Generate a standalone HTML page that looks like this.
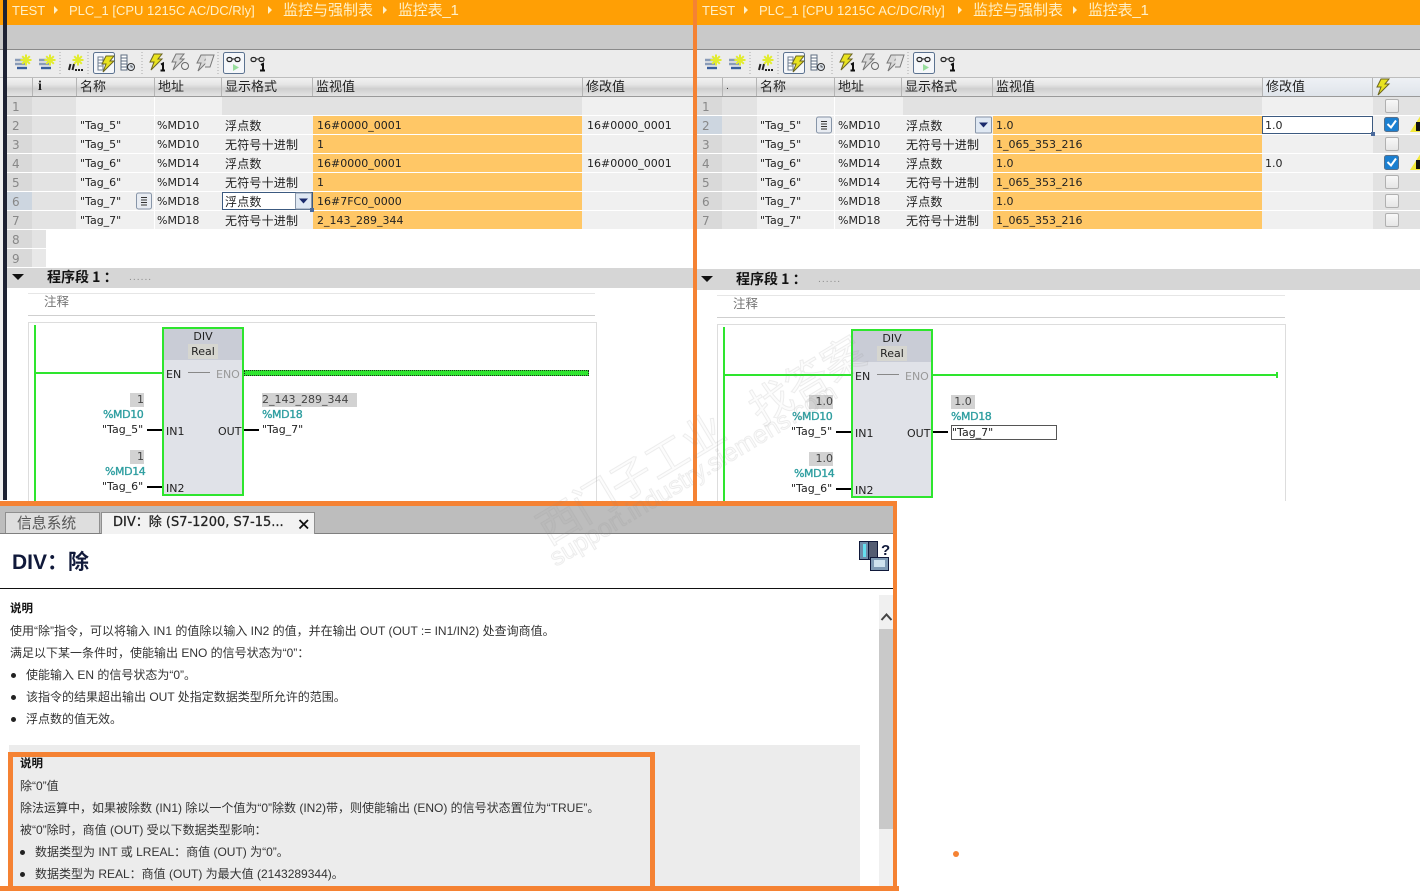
<!DOCTYPE html>
<html lang="zh"><head><meta charset="utf-8"><title>DIV</title>
<style>
html,body{margin:0;padding:0;background:#fff}
#p{position:relative;width:1420px;height:891px;overflow:hidden;background:#fff;font-family:"DejaVu Sans","Noto Sans CJK SC",sans-serif;color:#222}
#p div,#p span,#p b,#p i{position:absolute;display:block;font-style:normal}
.t{top:0;height:25px;background:#ff9f05}
.tt{top:2px;height:17px;color:#fff0c8;font:13px/17px "Liberation Sans","Noto Sans CJK SC",sans-serif;white-space:nowrap}
.ar{top:6px;width:0;height:0;border-left:4px solid #fff0c8;border-top:4px solid transparent;border-bottom:4px solid transparent}
.g1{top:25px;height:24px;background:#c9c9c9;border-bottom:1px solid #8a8a8a}
.g2{top:50px;height:27px;background:#ececec;border-bottom:1px solid #bdbdbd}
.h{top:78px;height:18px;background:linear-gradient(#f1f1f1,#e6e6e6 35%,#cfcfcf 60%,#e4e4e4);border-bottom:1px solid #9a9a9a}
.hc{top:78px;height:18px;line-height:19px;font-size:13px;padding-left:3px;border-left:1px solid #b5b5b5;color:#222;white-space:nowrap;box-sizing:border-box}
.r{left:0;width:1420px;height:18px}
.r span,.r b,.r i{top:0;height:18px;line-height:20px;font-size:11px;font-weight:400;white-space:nowrap;background:#f0f0f0;box-sizing:border-box;letter-spacing:0}
.r .n{background:#d9d9d9;color:#888;font-size:12px;padding-left:5px}
.r .k{background:#e3e3e3}
.r .m{background:#ffc766}
.r .cn{font-size:12px;letter-spacing:.2px}
.L .n{left:7px;width:25px}.L .k{left:32px;width:44px}.L .a{left:76px;width:78px;padding-left:4px}.L .b{left:155px;width:67px;padding-left:2px}.L .f{left:222px;width:91px;padding-left:3px}.L .m{left:313px;width:269px;padding-left:4px}.L .v{left:582px;width:111px;padding-left:5px}
.R .n{left:697px;width:25px}.R .k{left:722px;width:35px}.R .a{left:757px;width:77px;padding-left:3px}.R .b{left:835px;width:68px;padding-left:3px}.R .f{left:903px;width:90px;padding-left:3px}.R .m{left:993px;width:269px;padding-left:3px}.R .v{left:1262px;width:111px;padding-left:3px}.R .x{left:1373px;width:47px}
.g{background:#e2e2e2!important}
.cb{left:1385px;width:12px;height:12px;top:2px;border:1px solid #b0b0b0;border-radius:2px;background:linear-gradient(#f8f8f8,#e6e6e6)}
.sec{height:20px;background:#d6d6d6}
.tri{width:0;height:0;border-top:6px solid #111;border-left:6px solid transparent;border-right:6px solid transparent}
.s13{font:700 14px/18px "Noto Sans CJK SC",sans-serif;white-space:nowrap;color:#111}
.fb{width:78px;height:165px;border:2px solid #2ee52e;background:#e0e2e8}
.fh{left:0;top:0;width:78px;height:31px;background:#c9ccd6}
.l{font-size:11px;line-height:14px;white-space:nowrap;color:#222}
.tl{font-size:11px;-webkit-text-stroke:.35px #2e9ea0;letter-spacing:-.4px;line-height:14px;color:#2e9ea0;white-space:nowrap}
.bx{background:#d2d2d2;font-size:11px;line-height:14px;height:14px;text-align:right;white-space:nowrap;color:#444}
.bl{background:#000;height:2px}
.gr{background:#2ee52e}
.o{background:#f58233}
.d{font:12px/16px "Liberation Sans","Noto Sans CJK SC",sans-serif;color:#333;white-space:nowrap}
.dot{width:5px;height:5px;border-radius:50%;background:#222}
.w{color:rgba(0,0,0,.012);-webkit-text-stroke:1px rgba(150,150,150,.16);white-space:nowrap;transform-origin:0 50%;transform:rotate(-31deg);line-height:1;font-family:"Noto Sans CJK SC",sans-serif}
</style></head><body><div id="p">

<svg width="0" height="0" style="position:absolute"><defs>
<g id="star"><path d="M0 -5.500V5.500M-5.500 0H5.500M-3.800 -3.800L3.800 3.800M-3.800 3.800L3.800 -3.800" stroke="#e2ec2e" stroke-width="2"/></g>
<g id="bolt"><path d="M5 0H13L9 5H13L2 16L5 8H1Z" fill="#e8e220" stroke="#6a6420" stroke-width="1"/></g>
<g id="tb">
<path d="M15 60H27M15 64H25" stroke="#8a9cb8" stroke-width="2.400" fill="none"/><path d="M17 68H27" stroke="#3a5f9e" stroke-width="2.400"/><use href="#star" x="26" y="60"/>
<path d="M39 60H51M39 64H49" stroke="#8a9cb8" stroke-width="2.400" fill="none"/><path d="M41 68H51" stroke="#3a5f9e" stroke-width="2.400"/><use href="#star" x="50" y="60"/>
<path d="M60 52V76" stroke="#aaa" stroke-dasharray="1 2"/>
<path d="M69 70L70.500 64M72.500 70L74 64" stroke="#222" stroke-width="2"/><path d="M75 70H84" stroke="#222" stroke-width="2" stroke-dasharray="2 1"/><use href="#star" x="78" y="60"/>
<path d="M88 52V76" stroke="#aaa" stroke-dasharray="1 2"/>
<rect x="93.500" y="52.500" width="21" height="21" rx="2" fill="#f5f7fa" stroke="#5b7290"/>
<path d="M98 57H103V70H98ZM98 60H103M98 63H103M98 66H103" fill="#fff" stroke="#6d7c90"/><use href="#bolt" x="101" y="56"/>
<path d="M121 55H127V70H121ZM121 58H127M121 61H127M121 64H127M121 67H127" fill="#fff" stroke="#5d6c80"/><circle cx="131" cy="67" r="3.500" fill="#dfe6ee" stroke="#333"/><path d="M131 65V67H133" stroke="#333" fill="none" stroke-width=".8"/>
<path d="M142 52V76" stroke="#aaa" stroke-dasharray="1 2"/>
<use href="#bolt" x="149" y="54"/><path d="M161 64.500L163 63.500V70M160.500 70.500H165" stroke="#111" stroke-width="2" fill="none"/>
<path d="M176 54H184L180 59H184L173 70L176 62H172Z" fill="#d8d8d8" stroke="#777"/><circle cx="185" cy="66" r="3.500" fill="#eee" stroke="#666"/>
<path d="M201 55H209L205 60H209L198 71L201 63H197Z" fill="#d8d8d8" stroke="#777"/><path d="M206 55H214L210 67H205" fill="#e4e4e4" stroke="#777"/>
<path d="M218 52V76" stroke="#aaa" stroke-dasharray="1 2"/>
<rect x="223.500" y="52.500" width="21" height="21" rx="2" fill="#f5f7fa" stroke="#5b7290"/>
<rect x="227" y="57.500" width="5" height="4" rx="2" fill="none" stroke="#222" stroke-width="1.200"/><rect x="235" y="57.500" width="5" height="4" rx="2" fill="none" stroke="#222" stroke-width="1.200"/><path d="M232 59H235" stroke="#222"/><path d="M233 64L239 67.500L233 71Z" fill="#97dd9c"/>
<rect x="251" y="57.500" width="5" height="4" rx="2" fill="none" stroke="#222" stroke-width="1.200"/><rect x="259" y="57.500" width="5" height="4" rx="2" fill="none" stroke="#222" stroke-width="1.200"/><path d="M256 59H259" stroke="#222"/><path d="M261 65L263 64V70M260 70.500H265" stroke="#111" stroke-width="2" fill="none"/>
</g>
<g id="doc"><rect x=".5" y=".5" width="15" height="16" rx="2" fill="#e8ecf2" stroke="#8795a8"/><path d="M5 5H11M5 7.500H11M5 10H11M5 12.500H11" stroke="#333"/></g>
<g id="dd"><rect x=".5" y=".5" width="16" height="16" rx="1" fill="#dfe8f3" stroke="#8795a8"/><path d="M4 6H13L8.500 11Z" fill="#1a2a6c"/></g>
</defs></svg>

<!-- LEFT PANEL -->
<div class="t" style="left:0;width:693px"></div>
<div style="left:0;top:25px;width:5px;height:475px;background:#f0f0f0"></div>
<div class="g1" style="left:0;width:693px"></div>
<div class="g2" style="left:0;width:693px"></div>
<div class="tt" style="left:12px">TEST</div><div class="ar" style="left:54px"></div>
<div class="tt" style="left:69px">PLC_1 [CPU 1215C AC/DC/Rly]</div><div class="ar" style="left:268px"></div>
<div class="tt" style="left:283px;font-size:15px">监控与强制表</div><div class="ar" style="left:383px"></div>
<div class="tt" style="left:398px;font-size:15px;letter-spacing:-.2px">监控表_1</div>

<div class="h" style="left:7px;width:686px"></div>
<div class="hc" style="left:32px;width:44px;font:700 14px/18px 'Liberation Serif',serif;padding-left:5px">i</div>
<div class="hc" style="left:76px;width:78px">名称</div>
<div class="hc" style="left:154px;width:68px">地址</div>
<div class="hc" style="left:221px;width:91px">显示格式</div>
<div class="hc" style="left:312px;width:270px">监视值</div>
<div class="hc" style="left:582px;width:111px">修改值</div>

<div class="L">
<div class="r" style="top:97px"><b class="n">1</b><i class="k"></i><span class="a"></span><span class="b"></span><span class="f g"></span><span class="m g"></span><span class="v"></span></div>
<div class="r" style="top:116px"><b class="n">2</b><i class="k"></i><span class="a">"Tag_5"</span><span class="b">%MD10</span><span class="f cn">浮点数</span><span class="m">16#0000_0001</span><span class="v">16#0000_0001</span></div>
<div class="r" style="top:135px"><b class="n">3</b><i class="k"></i><span class="a">"Tag_5"</span><span class="b">%MD10</span><span class="f cn">无符号十进制</span><span class="m">1</span><span class="v"></span></div>
<div class="r" style="top:154px"><b class="n">4</b><i class="k"></i><span class="a">"Tag_6"</span><span class="b">%MD14</span><span class="f cn">浮点数</span><span class="m">16#0000_0001</span><span class="v">16#0000_0001</span></div>
<div class="r" style="top:173px"><b class="n">5</b><i class="k"></i><span class="a">"Tag_6"</span><span class="b">%MD14</span><span class="f cn">无符号十进制</span><span class="m">1</span><span class="v"></span></div>
<div class="r" style="top:192px"><b class="n" style="background:#cdd6e0">6</b><i class="k"></i><span class="a">"Tag_7"</span><span class="b">%MD18</span><span class="f cn" style="background:#fff;border:1px solid #3c5a80;line-height:18px;padding-left:2px">浮点数</span><span class="m">16#7FC0_0000</span><span class="v"></span></div>
<div class="r" style="top:211px"><b class="n">7</b><i class="k"></i><span class="a">"Tag_7"</span><span class="b">%MD18</span><span class="f cn">无符号十进制</span><span class="m">2_143_289_344</span><span class="v"></span></div>
<div class="r" style="top:230px"><b class="n">8</b><i class="k" style="width:14px"></i></div>
<div class="r" style="top:249px"><b class="n">9</b><i class="k" style="width:14px;background:#e8e8e8"></i></div>
</div>
<svg style="position:absolute;left:0;top:0" width="700" height="230"><use href="#tb"/><use href="#doc" x="136" y="192.500"/><use href="#dd" x="295" y="192.500"/><rect x="310" y="208" width="4" height="4" fill="#4a6a9c"/></svg>

<div style="left:3px;top:0;width:4px;height:500px;background:#1e2233"></div>

<!-- left network -->
<div class="sec" style="left:7px;top:268px;width:686px"></div>
<div class="tri" style="left:12px;top:274px"></div>
<div class="s13" style="left:47px;top:268px">程序段 1 ：</div>
<div style="left:129px;top:272px;font-size:9px;color:#888;letter-spacing:1px;line-height:12px">......</div>
<div style="left:28px;top:293px;width:567px;height:1px;background:#e6e6e6"></div>
<div style="left:44px;top:293px;font-size:12.500px;line-height:17px;color:#777">注释</div>
<div style="left:28px;top:315px;width:567px;height:1px;background:#cfcfcf"></div>
<div style="left:28px;top:322px;width:569px;height:180px;border:1px solid #ddd;border-bottom:0;box-sizing:border-box"></div>
<div class="gr" style="left:34px;top:325px;width:2px;height:176px"></div>
<div class="gr" style="left:35px;top:372px;width:128px;height:2px"></div>
<div style="left:244px;top:370px;width:345px;height:6px;box-sizing:border-box;border:1px dotted #222;background:#2ee52e"></div>
<div class="fb" style="left:162px;top:327px"><div class="fh"></div></div>
<div style="left:190px;top:330px;width:26px;height:14px;line-height:14px;font-size:11px;text-align:center">DIV</div>
<div style="left:188px;top:344px;width:30px;height:15px;line-height:15px;font-size:11px;text-align:center;background:#d6d6d0">Real</div>
<div class="l" style="left:166px;top:368px">EN</div>
<div style="left:188px;top:372px;width:22px;height:1px;background:#888"></div>
<div class="l" style="left:216px;top:368px;color:#999">ENO</div>
<div class="l" style="left:166px;top:425px">IN1</div>
<div class="l" style="left:218px;top:425px">OUT</div>
<div class="l" style="left:166px;top:482px">IN2</div>
<div class="bx" style="left:130px;top:393px;width:14px">1</div>
<div class="tl" style="left:103px;top:408px">%MD10</div>
<div class="l" style="left:102px;top:423px">"Tag_5"</div>
<div class="bl" style="left:147px;top:429px;width:15px"></div>
<div class="bx" style="left:130px;top:450px;width:14px">1</div>
<div class="tl" style="left:105px;top:465px">%MD14</div>
<div class="l" style="left:102px;top:480px">"Tag_6"</div>
<div class="bl" style="left:147px;top:486px;width:15px"></div>
<div class="bl" style="left:244px;top:429px;width:15px"></div>
<div class="bx" style="left:262px;top:393px;width:95px;text-align:left">2_143_289_344</div>
<div class="tl" style="left:262px;top:408px">%MD18</div>
<div class="l" style="left:262px;top:423px">"Tag_7"</div>

<!-- RIGHT PANEL -->
<div class="t" style="left:697px;width:723px"></div>
<div class="g1" style="left:697px;width:723px"></div>
<div class="g2" style="left:697px;width:723px"></div>
<div class="tt" style="left:702px">TEST</div><div class="ar" style="left:744px"></div>
<div class="tt" style="left:759px">PLC_1 [CPU 1215C AC/DC/Rly]</div><div class="ar" style="left:958px"></div>
<div class="tt" style="left:973px;font-size:15px">监控与强制表</div><div class="ar" style="left:1073px"></div>
<div class="tt" style="left:1088px;font-size:15px;letter-spacing:-.2px">监控表_1</div>

<div class="h" style="left:697px;width:723px"></div>
<div class="hc" style="left:722px;width:35px;font-size:9px">.</div>
<div class="hc" style="left:756px;width:78px">名称</div>
<div class="hc" style="left:834px;width:68px">地址</div>
<div class="hc" style="left:901px;width:91px">显示格式</div>
<div class="hc" style="left:992px;width:270px">监视值</div>
<div class="hc" style="left:1262px;width:111px;background:linear-gradient(#eef1f5,#dfe4ea)">修改值</div>
<div class="hc" style="left:1372px;width:48px;background:linear-gradient(#eef1f5,#dfe4ea)"></div>

<div class="R">
<div class="r" style="top:97px"><b class="n">1</b><i class="k"></i><span class="a"></span><span class="b"></span><span class="f g"></span><span class="m g"></span><span class="v"></span><span class="x g"></span></div>
<div class="r" style="top:116px"><b class="n" style="background:#cdd6e0">2</b><i class="k"></i><span class="a">"Tag_5"</span><span class="b">%MD10</span><span class="f cn">浮点数</span><span class="m">1.0</span><span class="v" style="background:#fff;border:1px solid #3c5a80;line-height:18px;padding-left:2px">1.0</span><span class="x"></span></div>
<div class="r" style="top:135px"><b class="n">3</b><i class="k"></i><span class="a">"Tag_5"</span><span class="b">%MD10</span><span class="f cn">无符号十进制</span><span class="m">1_065_353_216</span><span class="v"></span><span class="x g"></span></div>
<div class="r" style="top:154px"><b class="n">4</b><i class="k"></i><span class="a">"Tag_6"</span><span class="b">%MD14</span><span class="f cn">浮点数</span><span class="m">1.0</span><span class="v">1.0</span><span class="x"></span></div>
<div class="r" style="top:173px"><b class="n">5</b><i class="k"></i><span class="a">"Tag_6"</span><span class="b">%MD14</span><span class="f cn">无符号十进制</span><span class="m">1_065_353_216</span><span class="v"></span><span class="x g"></span></div>
<div class="r" style="top:192px"><b class="n">6</b><i class="k"></i><span class="a">"Tag_7"</span><span class="b">%MD18</span><span class="f cn">浮点数</span><span class="m">1.0</span><span class="v"></span><span class="x g"></span></div>
<div class="r" style="top:211px"><b class="n">7</b><i class="k"></i><span class="a">"Tag_7"</span><span class="b">%MD18</span><span class="f cn">无符号十进制</span><span class="m">1_065_353_216</span><span class="v"></span><span class="x g"></span></div>
</div>
<div class="cb" style="top:99px"></div><div class="cb" style="top:137px"></div><div class="cb" style="top:175px"></div><div class="cb" style="top:194px"></div><div class="cb" style="top:213px"></div>
<svg style="position:absolute;left:0;top:0" width="1420" height="230">
<use href="#tb" x="690"/>
<use href="#doc" x="816" y="116.500"/><use href="#dd" x="975" y="116.500"/>
<rect x="1371" y="132" width="4" height="4" fill="#4a6a9c"/>
<use href="#bolt" x="1376" y="79"/>
<g id="c1"><rect x="1384.500" y="117.500" width="14" height="14" rx="2" fill="#1b7fd0" stroke="#55708c"/><path d="M1387.500 124L1391 127.500L1396 120.500" stroke="#fff" stroke-width="2" fill="none"/></g>
<use href="#c1" y="38"/>
<path d="M1410 132L1421 115V132Z" fill="#f3e93c"/><rect x="1416" y="122" width="4" height="9" fill="#111"/>
<path d="M1410 170L1421 153V170Z" fill="#f3e93c"/><rect x="1416" y="160" width="4" height="9" fill="#111"/>
</svg>

<!-- right network -->
<div class="sec" style="left:697px;top:269px;width:723px;height:21px"></div>
<div class="tri" style="left:701px;top:276px"></div>
<div class="s13" style="left:736px;top:270px">程序段 1 ：</div>
<div style="left:818px;top:274px;font-size:9px;color:#888;letter-spacing:1px;line-height:12px">......</div>
<div style="left:717px;top:295px;width:568px;height:1px;background:#e6e6e6"></div>
<div style="left:733px;top:295px;font-size:12.500px;line-height:17px;color:#777">注释</div>
<div style="left:717px;top:317px;width:568px;height:1px;background:#cfcfcf"></div>
<div style="left:717px;top:324px;width:569px;height:177px;border:1px solid #ddd;border-bottom:0;box-sizing:border-box"></div>
<div class="gr" style="left:723px;top:327px;width:2px;height:175px"></div>
<div class="gr" style="left:724px;top:374px;width:128px;height:2px"></div>
<div class="gr" style="left:933px;top:374px;width:345px;height:2px"></div>
<div class="gr" style="left:1276px;top:372px;width:2px;height:6px"></div>
<div class="fb" style="left:851px;top:329px"><div class="fh"></div></div>
<div style="left:879px;top:332px;width:26px;height:14px;line-height:14px;font-size:11px;text-align:center">DIV</div>
<div style="left:877px;top:346px;width:30px;height:15px;line-height:15px;font-size:11px;text-align:center;background:#d6d6d0">Real</div>
<div class="l" style="left:855px;top:370px">EN</div>
<div style="left:877px;top:374px;width:22px;height:1px;background:#888"></div>
<div class="l" style="left:905px;top:370px;color:#999">ENO</div>
<div class="l" style="left:855px;top:427px">IN1</div>
<div class="l" style="left:907px;top:427px">OUT</div>
<div class="l" style="left:855px;top:484px">IN2</div>
<div class="bx" style="left:809px;top:395px;width:24px">1.0</div>
<div class="tl" style="left:792px;top:410px">%MD10</div>
<div class="l" style="left:791px;top:425px">"Tag_5"</div>
<div class="bl" style="left:836px;top:431px;width:15px"></div>
<div class="bx" style="left:809px;top:452px;width:24px">1.0</div>
<div class="tl" style="left:794px;top:467px">%MD14</div>
<div class="l" style="left:791px;top:482px">"Tag_6"</div>
<div class="bl" style="left:836px;top:488px;width:15px"></div>
<div class="bl" style="left:933px;top:431px;width:15px"></div>
<div class="bx" style="left:951px;top:395px;width:24px;text-align:center">1.0</div>
<div class="tl" style="left:951px;top:410px">%MD18</div>
<div class="l" style="left:951px;top:425px;width:104px;height:13px;border:1px solid #555;line-height:13px">"Tag_7"</div>

<!-- divider -->
<div class="o" style="left:693px;top:0;width:4px;height:505px"></div>

<!-- INFO PANEL -->
<div style="left:0;top:501px;width:897px;height:390px;background:#fff"></div>
<div style="left:0;top:506px;width:893px;height:27px;background:#bdbdbd;border-bottom:1px solid #7f7f7f"></div>
<div style="left:5px;top:512px;width:95px;height:21px;background:#dedede;border:1px solid #8f8f8f;border-bottom:0;box-sizing:border-box;font:14.800px/20px 'Noto Sans CJK SC',sans-serif;color:#555;padding-left:11px;white-space:nowrap">信息系统</div>
<div style="left:101px;top:512px;width:214px;height:22px;background:#f2f2f2;border:1px solid #8f8f8f;border-bottom:0;box-sizing:border-box;font:13px/20px 'DejaVu Sans','Noto Sans CJK SC',sans-serif;-webkit-text-stroke:.25px #222;color:#222;padding-left:11px;white-space:nowrap">DIV：除 (S7-1200, S7-15...</div>
<svg style="position:absolute;left:298px;top:518px" width="12" height="12"><path d="M1.500 2L10 10.500M10 2L1.500 10.500" stroke="#111" stroke-width="1.800"/></svg>
<div style="left:12px;top:549px;font:700 21px/28px 'Liberation Sans','Noto Sans CJK SC',sans-serif;color:#10193a;white-space:nowrap">DIV：除</div>
<div style="left:0;top:588px;width:893px;height:1px;background:#111"></div>
<svg style="position:absolute;left:859px;top:541px" width="32" height="32">
<rect x=".5" y=".5" width="18" height="18" fill="#535c72" stroke="#10193a"/><rect x=".5" y=".5" width="9" height="18" fill="#6f8ba8" stroke="#10193a"/><rect x="4" y="3" width="3" height="13" fill="#66e0f0"/>
<rect x="11.500" y="16.500" width="18" height="13" fill="#7f9bb5" stroke="#10193a"/><rect x="15" y="19" width="11" height="7" fill="#cfe3ef"/>
<text x="22" y="14" font-family="Liberation Sans" font-weight="700" font-size="15" fill="#10193a">?</text></svg>

<div style="left:879px;top:595px;width:14px;height:291px;background:#f0f0f0"></div>
<div style="left:879px;top:629px;width:14px;height:200px;background:#c9c9c9"></div>
<svg style="position:absolute;left:880px;top:611px" width="13" height="12"><path d="M1.500 9L6.500 3.500L11.500 9" fill="none" stroke="#444" stroke-width="2"/></svg>

<div class="d" style="left:10px;top:601px;font-weight:700;font-size:11.500px;color:#111">说明</div>
<div class="d" style="left:10px;top:623px">使用“除”指令，可以将输入 IN1 的值除以输入 IN2 的值，并在输出 OUT (OUT := IN1/IN2) 处查询商值。</div>
<div class="d" style="left:10px;top:645px">满足以下某一条件时，使能输出 ENO 的信号状态为“0”：</div>
<div class="dot" style="left:11px;top:673px"></div><div class="d" style="left:26px;top:667px">使能输入 EN 的信号状态为“0”。</div>
<div class="dot" style="left:11px;top:695px"></div><div class="d" style="left:26px;top:689px">该指令的结果超出输出 OUT 处指定数据类型所允许的范围。</div>
<div class="dot" style="left:11px;top:717px"></div><div class="d" style="left:26px;top:711px">浮点数的值无效。</div>

<div style="left:9px;top:745px;width:851px;height:141px;background:#ececec"></div>
<div class="d" style="left:20px;top:756px;font-weight:700;font-size:11.500px;color:#111">说明</div>
<div class="d" style="left:20px;top:778px">除“0”值</div>
<div class="d" style="left:20px;top:800px">除法运算中，如果被除数 (IN1) 除以一个值为“0”除数 (IN2)带，则使能输出 (ENO) 的信号状态置位为“TRUE”。</div>
<div class="d" style="left:20px;top:822px">被“0”除时，商值 (OUT) 受以下数据类型影响：</div>
<div class="dot" style="left:20px;top:850px"></div><div class="d" style="left:35px;top:844px">数据类型为 INT 或 LREAL：商值 (OUT) 为“0”。</div>
<div class="dot" style="left:20px;top:872px"></div><div class="d" style="left:35px;top:866px">数据类型为 REAL：商值 (OUT) 为最大值 (2143289344)。</div>

<!-- orange frames -->
<div class="o" style="left:0;top:501px;width:897px;height:5px"></div>
<div class="o" style="left:893px;top:501px;width:4px;height:390px"></div>
<div class="o" style="left:0;top:886px;width:899px;height:5px"></div>
<div class="o" style="left:8px;top:752px;width:647px;height:5px"></div>
<div class="o" style="left:8px;top:752px;width:5px;height:139px"></div>
<div class="o" style="left:650px;top:752px;width:5px;height:139px"></div>
<div class="o" style="left:953px;top:851px;width:6px;height:6px;border-radius:50%"></div>

<!-- watermark -->
<div class="w" style="left:540px;top:510px;font-size:42px">西门子工业</div>
<div class="w" style="left:752px;top:390px;font-size:42px">找答案</div>
<div class="w" style="left:552px;top:548px;font-size:25px;font-family:'Liberation Sans',sans-serif">support.industry.siemens.com</div>

</div></body></html>
